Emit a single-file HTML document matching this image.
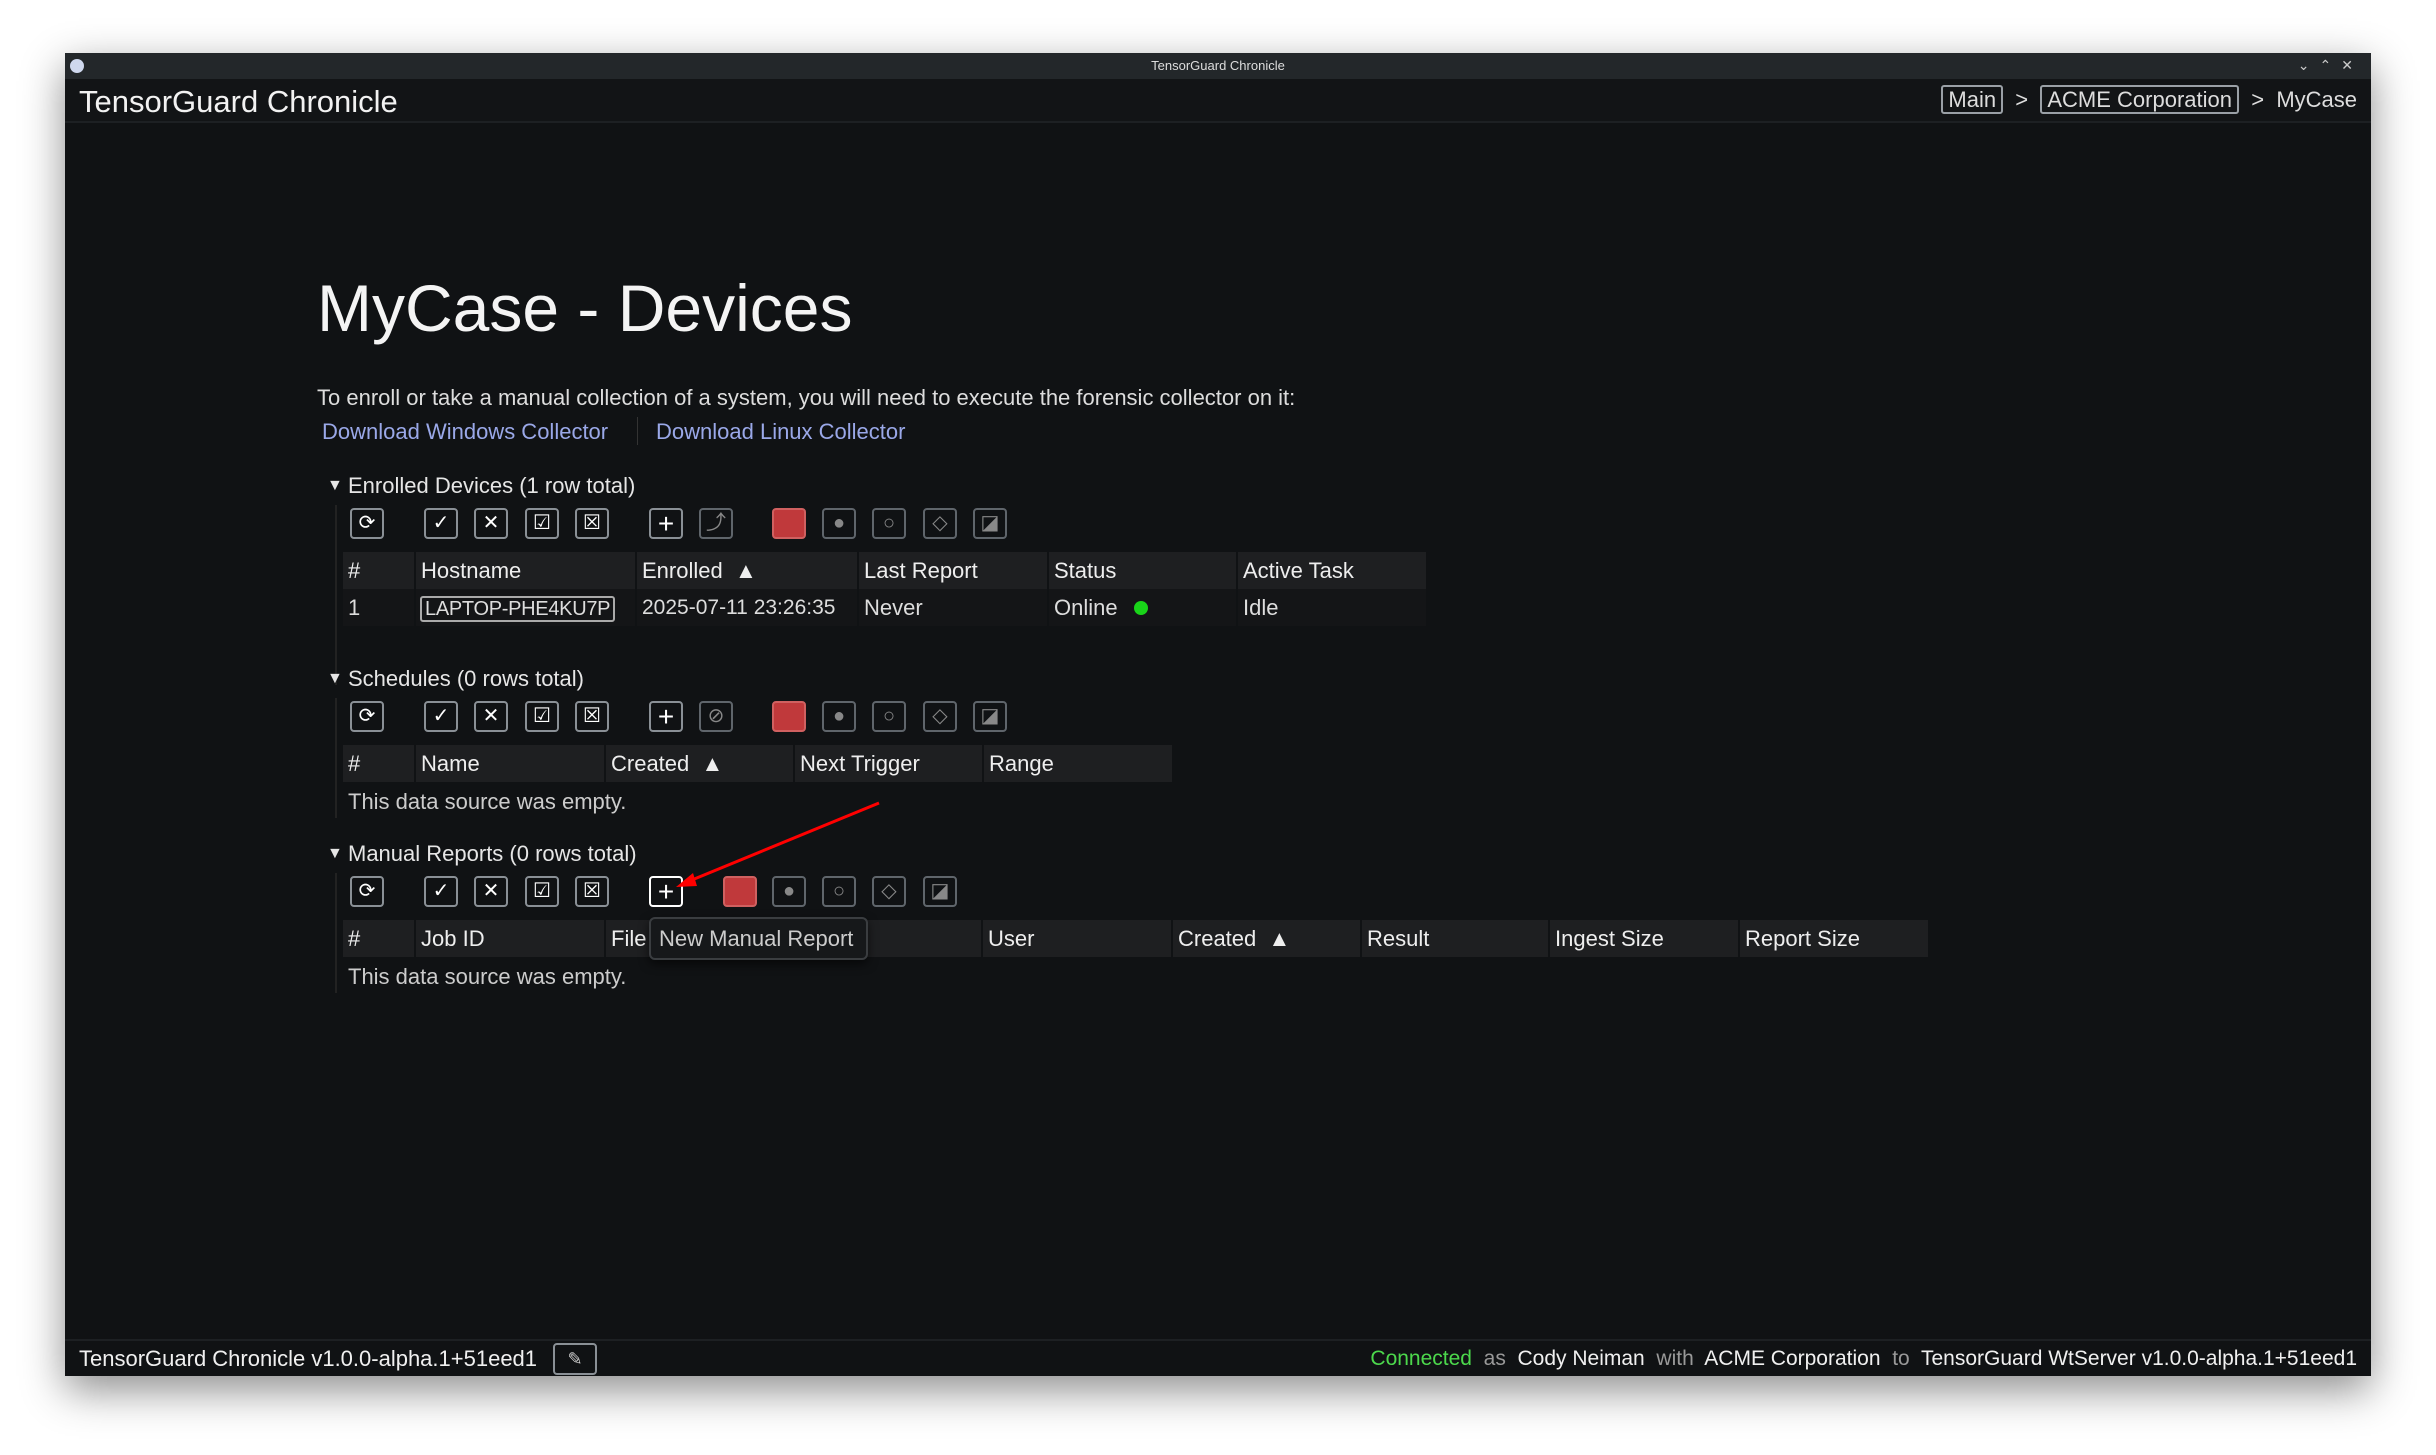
<!DOCTYPE html>
<html><head><meta charset="utf-8"><style>
*{box-sizing:border-box;margin:0;padding:0}
body{width:2436px;height:1455px;background:#fff;position:relative;overflow:hidden;font-family:"Liberation Sans",sans-serif;color:#e6e6e6}
.win{position:absolute;left:65px;top:53px;width:2306px;height:1323px;background:#101214;box-shadow:0 14px 40px rgba(0,0,0,.45)}
.a{position:absolute;white-space:nowrap}
.tb{position:absolute;left:0;top:0;width:100%;height:26px;background:#23272a}
.hdr{position:absolute;left:0;top:26px;width:100%;height:44px;background:#121416;border-bottom:2px solid #1d2023}
.bc{border:2px solid #9aa0a6;border-radius:3px;padding:0 5px;line-height:26px}
.t{font-size:22px}
.btn{position:absolute;width:34px;height:31px;border:2px solid #8a9096;border-radius:4px;color:#fff;font-size:20px;text-align:center;line-height:27px}
.dim{border-color:#5f656b;color:#888}
.red{background:#c0393b;border-color:#d06060}
.th{position:absolute;height:37px;background:#1e1f21;font-size:22px;line-height:37px;padding-left:5px;color:#eee;white-space:nowrap;overflow:hidden}
.td{position:absolute;height:37px;background:#141517;font-size:22px;line-height:37px;padding-left:5px;color:#ddd;white-space:nowrap}
.vl{position:absolute;width:2px;background:#222}
</style></head><body>
<div class="win">
<div class="tb"><div class="a" style="left:5px;top:6px;width:14px;height:14px;border-radius:50%;background:#cfd8ee"></div>
<div class="a" style="left:0;width:100%;text-align:center;top:5px;font-size:13px;color:#ddd">TensorGuard Chronicle</div>
<div class="a" style="right:8px;top:4px;font-size:14px;color:#ccc;letter-spacing:10px">⌄⌃✕</div></div>
<div class="hdr"><div class="a" style="left:14px;top:5px;font-size:31px;color:#f2f2f2">TensorGuard Chronicle</div>
<div class="a t" style="right:14px;top:8px;color:#ddd"><span class="bc">Main</span> &nbsp;&gt;&nbsp; <span class="bc">ACME Corporation</span> &nbsp;&gt;&nbsp; MyCase</div></div>

<div class="a" style="left:252px;top:217px;font-size:66px;color:#f4f4f4">MyCase - Devices</div>
<div class="a t" style="left:252px;top:332px;color:#ddd">To enroll or take a manual collection of a system, you will need to execute the forensic collector on it:</div>
<div class="a t" style="left:257px;top:366px;color:#9aa8e8">Download Windows Collector</div>
<div class="a" style="left:572px;top:364px;width:1px;height:28px;background:#333"></div>
<div class="a t" style="left:591px;top:366px;color:#9aa8e8">Download Linux Collector</div>

<!-- Enrolled -->
<div class="a" style="left:262px;top:424px;font-size:16px">▼</div>
<div class="a t" style="left:283px;top:420px">Enrolled Devices (1 row total)</div>
<div class="vl" style="left:270px;top:452px;height:180px"></div>
<div class="btn" style="left:285px;top:455px">⟳</div>
<div class="btn" style="left:359px;top:455px">✓</div><div class="btn" style="left:409px;top:455px">✕</div><div class="btn" style="left:460px;top:455px">☑</div><div class="btn" style="left:510px;top:455px">☒</div>
<div class="btn" style="left:584px;top:455px;font-size:28px">+</div><div class="btn dim" style="left:634px;top:455px">⤴</div>
<div class="btn red" style="left:707px;top:455px"></div><div class="btn dim" style="left:757px;top:455px">●</div><div class="btn dim" style="left:807px;top:455px">○</div><div class="btn dim" style="left:858px;top:455px">◇</div><div class="btn dim" style="left:908px;top:455px">◪</div>
<div class="th" style="left:278px;top:499px;width:71px">#</div><div class="th" style="left:351px;top:499px;width:219px">Hostname</div><div class="th" style="left:572px;top:499px;width:220px">Enrolled &nbsp;▲</div><div class="th" style="left:794px;top:499px;width:188px">Last Report</div><div class="th" style="left:984px;top:499px;width:187px">Status</div><div class="th" style="left:1173px;top:499px;width:188px">Active Task</div>
<div class="td" style="left:278px;top:536px;width:71px">1</div><div class="td" style="left:351px;top:536px;width:219px;padding-left:4px"><span style="border:2px solid #aaa;border-radius:3px;padding:0 3px;font-size:20px;letter-spacing:-0.3px">LAPTOP-PHE4KU7P</span></div><div class="td" style="left:572px;top:536px;width:220px;font-size:21px">2025-07-11 23:26:35</div><div class="td" style="left:794px;top:536px;width:188px">Never</div><div class="td" style="left:984px;top:536px;width:187px">Online <span style="display:inline-block;width:14px;height:14px;border-radius:50%;background:#19d419;margin-left:10px"></span></div><div class="td" style="left:1173px;top:536px;width:188px">Idle</div>

<!-- Schedules -->
<div class="a" style="left:262px;top:617px;font-size:16px">▼</div>
<div class="a t" style="left:283px;top:613px">Schedules (0 rows total)</div>
<div class="vl" style="left:270px;top:645px;height:120px"></div>
<div class="btn" style="left:285px;top:648px">⟳</div>
<div class="btn" style="left:359px;top:648px">✓</div><div class="btn" style="left:409px;top:648px">✕</div><div class="btn" style="left:460px;top:648px">☑</div><div class="btn" style="left:510px;top:648px">☒</div>
<div class="btn" style="left:584px;top:648px;font-size:28px">+</div><div class="btn dim" style="left:634px;top:648px">⊘</div>
<div class="btn red" style="left:707px;top:648px"></div><div class="btn dim" style="left:757px;top:648px">●</div><div class="btn dim" style="left:807px;top:648px">○</div><div class="btn dim" style="left:858px;top:648px">◇</div><div class="btn dim" style="left:908px;top:648px">◪</div>
<div class="th" style="left:278px;top:692px;width:71px">#</div><div class="th" style="left:351px;top:692px;width:188px">Name</div><div class="th" style="left:541px;top:692px;width:187px">Created &nbsp;▲</div><div class="th" style="left:730px;top:692px;width:187px">Next Trigger</div><div class="th" style="left:919px;top:692px;width:188px">Range</div>
<div class="a t" style="left:283px;top:736px;color:#ccc">This data source was empty.</div>

<!-- Manual -->
<div class="a" style="left:262px;top:792px;font-size:16px">▼</div>
<div class="a t" style="left:283px;top:788px">Manual Reports (0 rows total)</div>
<div class="vl" style="left:270px;top:820px;height:120px"></div>
<div class="btn" style="left:285px;top:823px">⟳</div>
<div class="btn" style="left:359px;top:823px">✓</div><div class="btn" style="left:409px;top:823px">✕</div><div class="btn" style="left:460px;top:823px">☑</div><div class="btn" style="left:510px;top:823px">☒</div>
<div class="btn" style="left:584px;top:823px;font-size:28px;border-color:#fff">+</div>
<div class="btn red" style="left:658px;top:823px"></div><div class="btn dim" style="left:707px;top:823px">●</div><div class="btn dim" style="left:757px;top:823px">○</div><div class="btn dim" style="left:807px;top:823px">◇</div><div class="btn dim" style="left:858px;top:823px">◪</div>
<div class="th" style="left:278px;top:867px;width:71px">#</div><div class="th" style="left:351px;top:867px;width:188px">Job ID</div><div class="th" style="left:541px;top:867px;width:187px">File</div><div class="th" style="left:730px;top:867px;width:186px"></div><div class="th" style="left:918px;top:867px;width:188px">User</div><div class="th" style="left:1108px;top:867px;width:187px">Created &nbsp;▲</div><div class="th" style="left:1297px;top:867px;width:186px">Result</div><div class="th" style="left:1485px;top:867px;width:188px">Ingest Size</div><div class="th" style="left:1675px;top:867px;width:188px">Report Size</div>
<div class="a t" style="left:283px;top:911px;color:#ccc">This data source was empty.</div>
<div class="a t" style="left:584px;top:864px;width:219px;height:43px;background:#16181a;border:2px solid #3a3d40;border-radius:6px;line-height:39px;padding-left:8px;color:#ccc;box-shadow:0 4px 10px rgba(0,0,0,.6)">New Manual Report</div>
<svg class="a" style="left:0;top:0" width="2306" height="1323"><line x1="814" y1="750" x2="622" y2="829" stroke="#f00" stroke-width="3"/><polygon points="611,834 628,820 632,833" fill="#f00"/></svg>

<div class="a" style="left:0;top:1286px;width:100%;height:2px;background:#1d2023"></div>
<div class="a t" style="left:14px;top:1293px;color:#f0f0f0">TensorGuard Chronicle v1.0.0-alpha.1+51eed1</div>
<div class="btn" style="left:488px;top:1290px;width:44px;height:32px;font-size:18px;line-height:28px;color:#ccc">✎</div>
<div class="a" style="right:14px;top:1294px;font-size:21px;color:#f0f0f0"><span style="color:#4cd84c">Connected</span> &nbsp;<span style="color:#999">as</span>&nbsp; Cody Neiman &nbsp;<span style="color:#999">with</span>&nbsp; ACME Corporation &nbsp;<span style="color:#999">to</span>&nbsp; TensorGuard WtServer v1.0.0-alpha.1+51eed1</div>
</div>
</body></html>
